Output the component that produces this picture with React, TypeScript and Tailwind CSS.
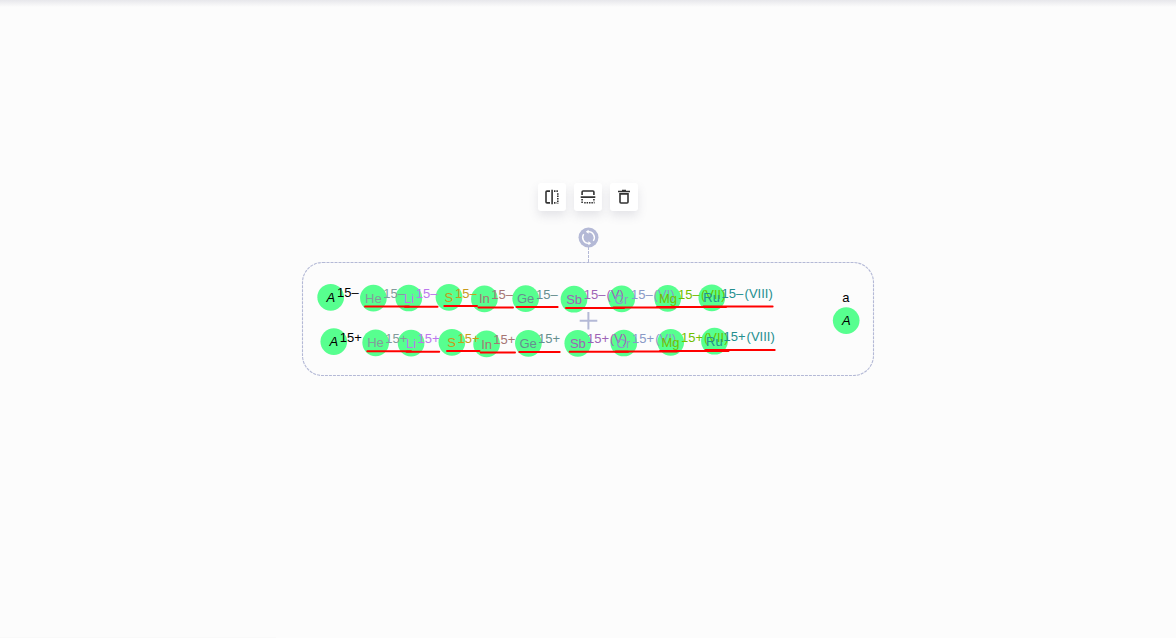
type Atom = {
  symbol: string;
  cx: number;
  cy: number;
  color: string;
  x: number;
  baseline: number;
  supX: number;
  supBaseline: number;
  charge: string;
  valence?: string;
  valenceX?: number;
  line?: [number, number, number];
};

const topRow: Atom[] = [
  { symbol: "A", cx: 330.7, cy: 297.3, color: "#000000", x: 326.6, baseline: 302, supX: 337, supBaseline: 297, charge: "15–" },
  { symbol: "He", cx: 373.4, cy: 298.1, color: "#849b9b", x: 365, baseline: 303, supX: 383.3, supBaseline: 298, charge: "15–", line: [365, 409, 306.6] },
  { symbol: "Li", cx: 408.8, cy: 298, color: "#bd77ed", x: 404, baseline: 303, supX: 415.7, supBaseline: 298, charge: "15–", line: [405, 437.5, 306.7] },
  { symbol: "S", cx: 449, cy: 297.3, color: "#c99a19", x: 444.6, baseline: 302, supX: 455, supBaseline: 298, charge: "15–", line: [444.3, 477, 306] },
  { symbol: "In", cx: 484.4, cy: 298.9, color: "#a67573", x: 479, baseline: 303, supX: 491.3, supBaseline: 299, charge: "15–", line: [478.5, 513, 307.4] },
  { symbol: "Ge", cx: 525.7, cy: 298.6, color: "#668f8f", x: 517, baseline: 303, supX: 536, supBaseline: 299, charge: "15–", line: [516.5, 557.6, 307.1] },
  { symbol: "Sb", cx: 574, cy: 299.2, color: "#9e63b5", x: 566.2, baseline: 304, supX: 583.7, supBaseline: 299, charge: "15–", valence: "(V)", valenceX: 606.6, line: [566, 624, 307.9] },
  { symbol: "Cr", cx: 621.7, cy: 298.9, color: "#8a99c7", x: 614.6, baseline: 304, supX: 631, supBaseline: 299, charge: "15–", valence: "(VI)", valenceX: 653.6, line: [613.5, 675, 307.4] },
  { symbol: "Mg", cx: 667.7, cy: 298.4, color: "#71bf00", x: 658.9, baseline: 303, supX: 678, supBaseline: 299, charge: "15–", valence: "(VII)", valenceX: 701, line: [657, 726, 306.9] },
  { symbol: "Ru", cx: 711.8, cy: 297.8, color: "#248f8f", x: 703.3, baseline: 302, supX: 721.5, supBaseline: 298, charge: "15–", valence: "(VIII)", valenceX: 744.6, line: [703.5, 772.6, 306.4] },
];

const bottomRow: Atom[] = [
  { symbol: "A", cx: 333.8, cy: 341.6, color: "#000000", x: 329.5, baseline: 346, supX: 339.7, supBaseline: 342, charge: "15+" },
  { symbol: "He", cx: 375.7, cy: 342.8, color: "#849b9b", x: 367.2, baseline: 347, supX: 385.3, supBaseline: 343, charge: "15+", line: [367.3, 411, 351.3] },
  { symbol: "Li", cx: 411.1, cy: 343.1, color: "#bd77ed", x: 406, baseline: 348, supX: 417.5, supBaseline: 343, charge: "15+", line: [406.5, 439.2, 351.7] },
  { symbol: "S", cx: 451.9, cy: 342.3, color: "#c99a19", x: 447.3, baseline: 347, supX: 457.5, supBaseline: 343, charge: "15+", line: [447, 479.5, 350.9] },
  { symbol: "In", cx: 486.6, cy: 343.9, color: "#a67573", x: 481.2, baseline: 349, supX: 493.3, supBaseline: 344, charge: "15+", line: [480.7, 515, 352.4] },
  { symbol: "Ge", cx: 528.4, cy: 343.3, color: "#668f8f", x: 519.4, baseline: 348, supX: 538, supBaseline: 343, charge: "15+", line: [519.3, 559.7, 352] },
  { symbol: "Sb", cx: 577.8, cy: 343.3, color: "#9e63b5", x: 569.9, baseline: 348, supX: 587, supBaseline: 343, charge: "15+", valence: "(V)", valenceX: 609.7, line: [569.7, 628, 351.8] },
  { symbol: "Cr", cx: 623.8, cy: 343, color: "#8a99c7", x: 616.6, baseline: 348, supX: 632, supBaseline: 343, charge: "15+", valence: "(VI)", valenceX: 655.2, line: [615.7, 677, 351.4] },
  { symbol: "Mg", cx: 670.7, cy: 342.3, color: "#71bf00", x: 661.5, baseline: 347, supX: 681, supBaseline: 342, charge: "15+", valence: "(VII)", valenceX: 704, line: [660, 728.5, 350.9] },
  { symbol: "Ru", cx: 714.5, cy: 341.2, color: "#248f8f", x: 706, baseline: 346, supX: 723.5, supBaseline: 341, charge: "15+", valence: "(VIII)", valenceX: 746.6, line: [705.5, 774.7, 350] },
];

const atoms = [...topRow, ...bottomRow];

function Structure() {
  return (
    <svg
      width="1176"
      height="638"
      viewBox="0 0 1176 638"
      className="block"
      fontFamily="'Liberation Sans', Arial, sans-serif"
      fontSize="13"
    >
      {atoms.map((a, i) => (
        <circle key={i} cx={a.cx} cy={a.cy} r="13.35" fill="#57ff8f" />
      ))}
      <circle cx="846.2" cy="320.6" r="13.35" fill="#57ff8f" />
      {atoms.map((a, i) => (
        <g key={i} fill={a.color}>
          <text x={a.x} y={a.baseline} fontStyle={a.symbol === "A" ? "italic" : "normal"}>{a.symbol}</text>
          <text x={a.supX} y={a.supBaseline}>{a.charge}</text>
          {a.valence && <text x={a.valenceX} y={a.supBaseline}>{a.valence}</text>}
        </g>
      ))}
      <text x="842.3" y="302">a</text>
      <text x="842" y="325" fontStyle="italic">A</text>
      {atoms.map((a, i) =>
        a.line ? (
          <path key={i} d={`M${a.line[0]} ${a.line[2]}H${a.line[1]}`} stroke="#ff0000" strokeWidth="2" strokeLinecap="round" />
        ) : null,
      )}
      <g fill="none" stroke="#b4b9d6">
        <rect x="302.5" y="262.5" width="571" height="113" rx="20" strokeWidth="1.1" strokeDasharray="3 1" />
        <path d="M588.5 247V262" strokeDasharray="3 1" />
        <path d="M588.4 312V329.5M579.7 320.7H597.3" strokeWidth="2" />
      </g>
      <circle cx="588.5" cy="237.5" r="10" fill="#b4b9d6" />
      <g fill="none" stroke="#ffffff" strokeWidth="1.4">
        <path d="M583.7 234.2A5.8 5.8 0 0 0 589 243.3" />
        <path d="M593.3 240.8A5.8 5.8 0 0 0 588 231.7" />
      </g>
      <path d="M588.6 229.8V233.8L585.8 231.8ZM588.4 245.2V241.2L591.2 243.2Z" fill="#ffffff" />
    </svg>
  );
}

function FlipHorizontal() {
  return (
    <svg width="16" height="16" viewBox="0 0 16 16" fill="none" stroke="#333333" strokeWidth="1.6">
      <path d="M6 2.1H3Q2 2.1 2 3.1V12.9Q2 13.9 3 13.9H6M8.1.7V15.3" />
      <path d="M10 2.1H14.6M13.8 4.2V14.6M10 13.9H12.8" strokeDasharray="1.5 .9" />
    </svg>
  );
}

function FlipVertical() {
  return (
    <svg width="16" height="16" viewBox="0 0 16 16" fill="none" stroke="#333333" strokeWidth="1.6">
      <path d="M2.1 6V3Q2.1 2 3.1 2H12.9Q13.9 2 13.9 3V6M.7 8.1H15.3" />
      <path d="M2.1 10V14.6M4.2 13.8H14.6M13.9 10V12.8" strokeDasharray="1.5 .9" />
    </svg>
  );
}

function Trash() {
  return (
    <svg width="16" height="16" viewBox="0 0 16 16" fill="none" stroke="#333333" strokeWidth="1.6">
      <path d="M2 2.5H14M6 1.6H10M4 4.9H12V13Q12 14 11 14H5Q4 14 4 13Z" />
    </svg>
  );
}

const tools = [
  { name: "Horizontal flip", Icon: FlipHorizontal },
  { name: "Vertical flip", Icon: FlipVertical },
  { name: "Delete", Icon: Trash },
];

export default function App() {
  return (
    <main className="relative h-[638px] w-[1176px] overflow-hidden bg-[#fcfcfc]">
      <Structure />
      <div className="absolute inset-x-0 top-0 h-[7px] bg-linear-to-b from-[#e7e7eb] to-[#fcfcfc]" />
      <div className="absolute bottom-0 left-0 h-px w-[276px] bg-[#f9f9f9]" />
      <div className="absolute top-[183px] left-[538px] flex gap-2">
        {tools.map(({ name, Icon }) => (
          <button
            key={name}
            aria-label={name}
            className="flex size-7 items-center justify-center rounded-[3px] bg-white shadow-[0_5px_10px_rgba(103,104,132,0.16)]"
          >
            <Icon />
          </button>
        ))}
      </div>
    </main>
  );
}
